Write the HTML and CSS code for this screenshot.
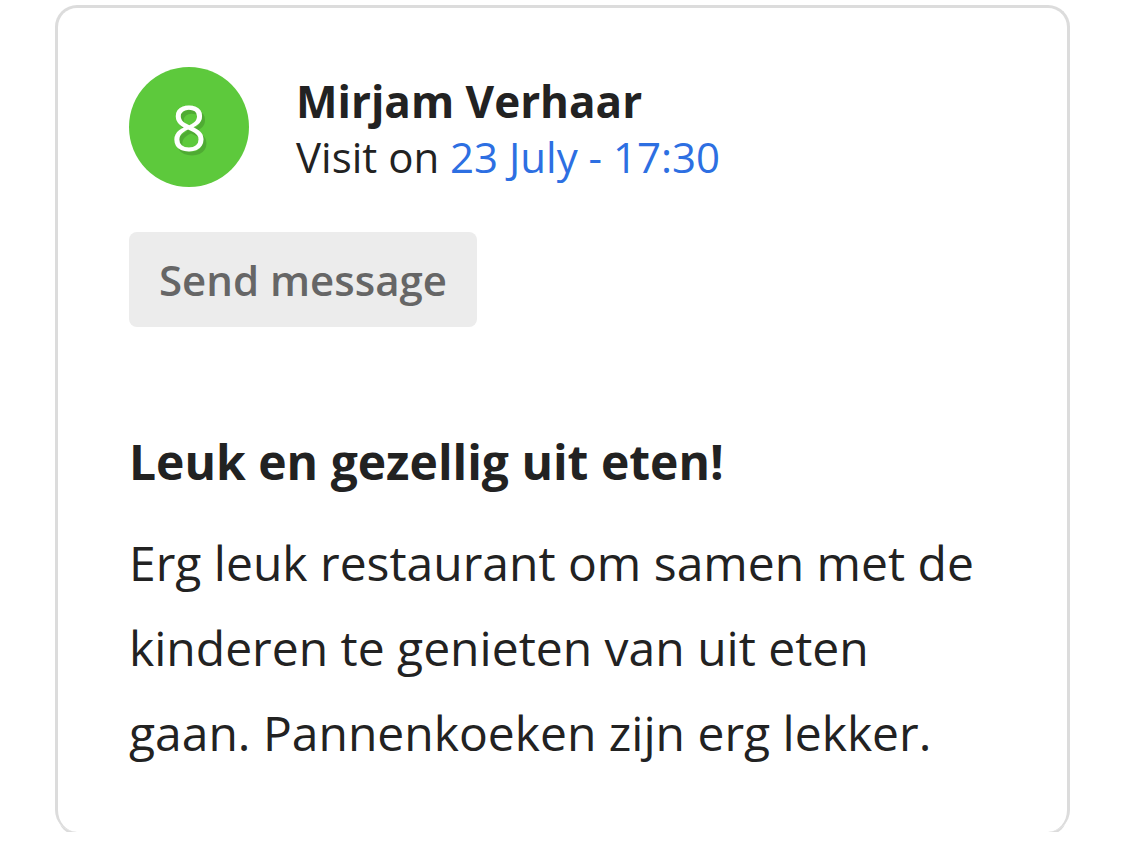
FILE: index.html
```html
<!DOCTYPE html>
<html lang="en">

<head>
  <meta charset="UTF-8">
  <meta name="viewport" content="width=device-width, initial-scale=1.0">
  <title>Review</title>
  <link rel="stylesheet" href="styles.css">
</head>

<body>
  <div class="review-card">
    <div class="review-head">
      <div class="score">8</div>
      <div class="guest">
        <div class="guest-name">Mirjam Verhaar</div>
        <div class="visit">Visit on <span class="visit-date">23 July - 17:30</span></div>
      </div>
    </div>

    <button class="message-button">Send message</button>

    <h3 class="review-title">Leuk en gezellig uit eten!</h3>
    <p class="review-text">Erg leuk restaurant om samen met de kinderen te genieten van uit eten gaan. Pannenkoeken zijn erg lekker.</p>
  </div>
</body>

</html>
```

FILE: styles.css
```css
body {
  margin: 0;
  padding: 5px 0 0 55px;
  background-color: #ffffff;
  font-family: "Open Sans", "Liberation Sans", sans-serif;
  color: #222222;
}

.review-card {
  width: 1015px;
  height: 827px;
  box-sizing: border-box;
  padding: 59px 71px 0 71px;
  border: 3px solid #dcdcdc;
  border-bottom: 0;
  border-radius: 22px;
  box-shadow: 0 6px 0 -3px #dcdcdc;
}

.review-head {
  display: flex;
  align-items: flex-start;
}

.score {
  width: 120px;
  height: 120px;
  border-radius: 50%;
  background-color: #5dc93c;
  color: #ffffff;
  font-size: 62px;
  line-height: 120px;
  text-align: center;
  text-shadow: 3px 4px 0 rgba(0, 0, 0, 0.15);
  flex-shrink: 0;
}

.guest {
  margin: 5px 0 0 47px;
}

.guest-name {
  font-size: 44px;
  font-weight: 700;
  line-height: 58px;
}

.visit {
  font-size: 42px;
  line-height: 54px;
}

.visit-date {
  color: #2d6fe2;
}

.message-button {
  display: block;
  margin-top: 45px;
  width: 348px;
  height: 95px;
  border: 0;
  border-radius: 8px;
  background-color: #ececec;
  color: #666666;
  font-family: inherit;
  font-size: 42px;
  font-weight: 600;
  cursor: pointer;
}

.review-title {
  margin: 103px 0 0 0;
  font-size: 48px;
  font-weight: 700;
  line-height: 64px;
}

.review-text {
  margin: 26px 0 0 0;
  font-size: 48px;
  line-height: 85px;
}
```
